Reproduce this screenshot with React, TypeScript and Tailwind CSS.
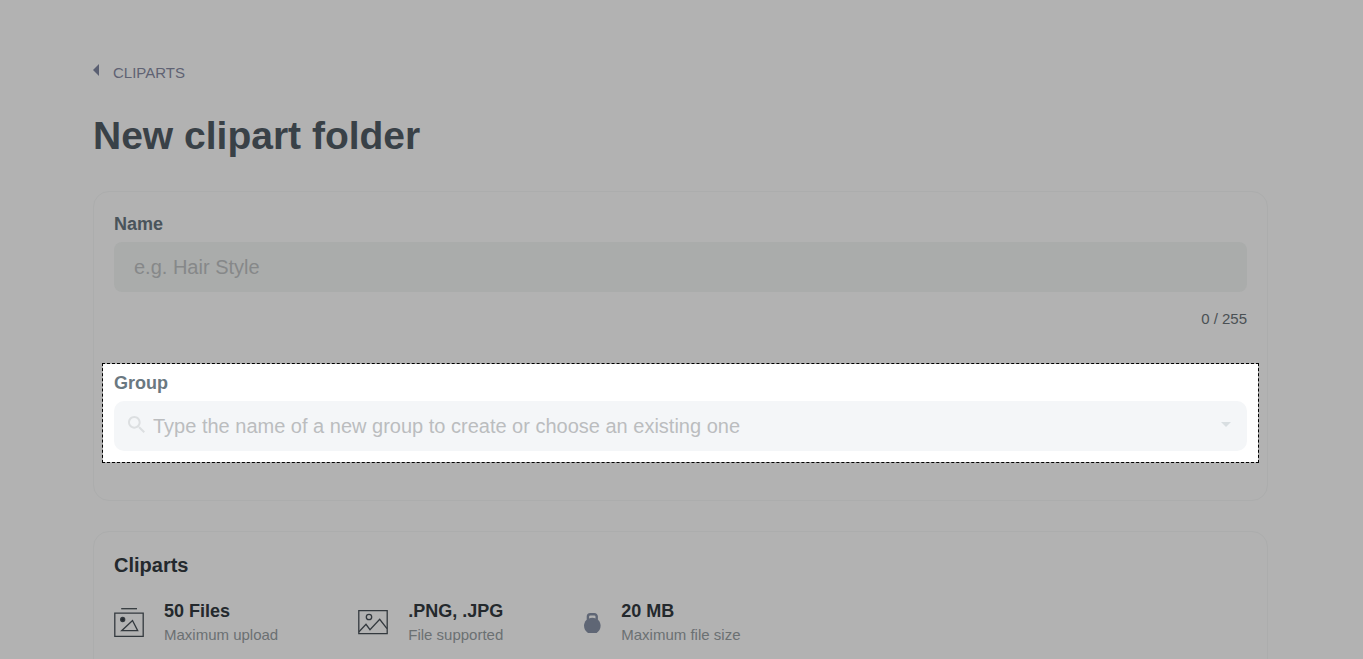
import { useState } from "react";

interface SpecProps {
  icon: React.ReactNode;
  title: string;
  text: string;
}

function Spec({ icon, title, text }: SpecProps) {
  return (
    <div className="flex items-center gap-5">
      {icon}
      <div>
        <p className="text-lg leading-6 font-bold text-[#24292d]">{title}</p>
        <p className="text-[15px] leading-6 text-[#6b7072]">{text}</p>
      </div>
    </div>
  );
}

function FilesIcon() {
  return (
    <svg width="30" height="30" viewBox="0 0 30 30" fill="none" stroke="#33393e" strokeWidth="1.3" aria-hidden="true">
      <path d="M7.2.7h15.8" />
      <path d="M.8 5.2h28.4v23.2H.8z" />
      <circle cx="8.7" cy="11.5" r="2" fill="#24292d" />
      <path d="M7.700 22.700h16l-5.200-10.200z" />
    </svg>
  );
}

function ImageIcon() {
  return (
    <svg width="30" height="30" viewBox="0 0 30 30" fill="none" stroke="#33393e" strokeWidth="1.3" aria-hidden="true">
      <path d="M.8 2.600h28.400v23H.8z" />
      <circle cx="11" cy="9" r="2.700" />
      <path d="M1 23.700l7-7.400 4 5.400 9.700-10.400 7.300 9.400" />
    </svg>
  );
}

function WeightIcon() {
  return (
    <svg width="18" height="20" viewBox="0 0 18 20" fill="#5f6675" aria-hidden="true">
      <rect x="4.900" y="1.200" width="8.800" height="7" rx="2.400" fill="none" stroke="#5f6675" strokeWidth="2.400" />
      <path d="M9.300 4.700c4.800 0 8.300 3.600 8.300 8 0 3-1.600 5.600-4 7.300H5c-2.400-1.700-4-4.300-4-7.300 0-4.400 3.500-8 8.300-8z" />
    </svg>
  );
}

export default function App() {
  const [name, setName] = useState("");
  const [group, setGroup] = useState("");

  return (
    <div className="h-screen overflow-hidden bg-[#b2b2b2] pt-[61px] pr-[95px] pl-[93px] font-['Liberation_Sans',Arial,sans-serif]">
      {/* Header */}
      <a href="#cliparts" className="flex w-fit items-center text-[15px] leading-6 text-[#5f6273]">
        <svg width="6" height="12" viewBox="0 0 6 12" fill="#5a5f72" className="mr-[14px] mb-[6px]" aria-hidden="true">
          <path d="M6 0v12L0 6z" />
        </svg>
        CLIPARTS
      </a>
      <h1 className="mt-[27px] text-[39px] leading-[48px] font-bold text-[#394147]">New clipart folder</h1>

      {/* Folder details */}
      <section className="mt-[31px] rounded-2xl border border-[#acadad] px-5 pt-5 pb-[37px]">
        <label htmlFor="name" className="block text-lg leading-6 font-bold text-[#4a545b]">
          Name
        </label>
        <input
          id="name"
          type="text"
          maxLength={255}
          value={name}
          onChange={(e) => setName(e.target.value)}
          placeholder="e.g. Hair Style"
          className="mt-[6px] block h-[50px] w-full rounded-lg bg-[#aaacab] px-5 text-xl text-[#394147] outline-none placeholder:text-[#868889]"
        />
        <p className="mt-4 text-right text-[15px] leading-[22px] text-[#4a5054]">{name.length} / 255</p>

        {/* Highlighted step */}
        <div className="-mx-3 mt-[33px] border border-dashed border-black bg-white bg-clip-padding px-[11px] pt-[7px] pb-[11px]">
          <label htmlFor="group" className="block text-lg leading-6 font-bold text-[#6a7881]">
            Group
          </label>
          <div className="mt-[6px] flex h-[50px] items-center rounded-[10px] bg-[#f4f6f8] pr-4 pl-[14px]">
            <svg width="17" height="17" viewBox="3 3 17.5 17.5" fill="#dcdfe1" className="mb-1 shrink-0" aria-hidden="true">
              <path d="M15.500 14h-.79l-.28-.27C15.410 12.590 16 11.110 16 9.500 16 5.910 13.090 3 9.500 3S3 5.910 3 9.500 5.910 16 9.500 16c1.610 0 3.090-.59 4.230-1.570l.27.28v.79l5 4.990L20.490 19l-4.990-5zm-6 0C7.010 14 5 11.990 5 9.500S7.010 5 9.500 5 14 7.010 14 9.500 11.990 14 9.500 14z" />
            </svg>
            <input
              id="group"
              type="text"
              role="combobox"
              aria-expanded="false"
              value={group}
              onChange={(e) => setGroup(e.target.value)}
              placeholder="Type the name of a new group to create or choose an existing one"
              className="h-full min-w-0 flex-1 px-2 text-xl text-[#394147] outline-none placeholder:text-[#bbbdbf]"
            />
            <svg width="10" height="5" viewBox="0 0 10 5" fill="#d8dee1" className="mb-1 shrink-0" aria-hidden="true">
              <path d="M0 0h10L5 5z" />
            </svg>
          </div>
        </div>
      </section>

      {/* Upload */}
      <section className="mt-[30px] rounded-2xl border border-[#acadad] px-5 pt-5 pb-10">
        <h2 className="text-xl leading-[26px] font-bold text-[#24292d]">Cliparts</h2>
        <div className="mt-[21px] flex gap-20">
          <Spec icon={<FilesIcon />} title="50 Files" text="Maximum upload" />
          <Spec icon={<ImageIcon />} title=".PNG, .JPG" text="File supported" />
          <Spec icon={<WeightIcon />} title="20 MB" text="Maximum file size" />
        </div>
      </section>
    </div>
  );
}
